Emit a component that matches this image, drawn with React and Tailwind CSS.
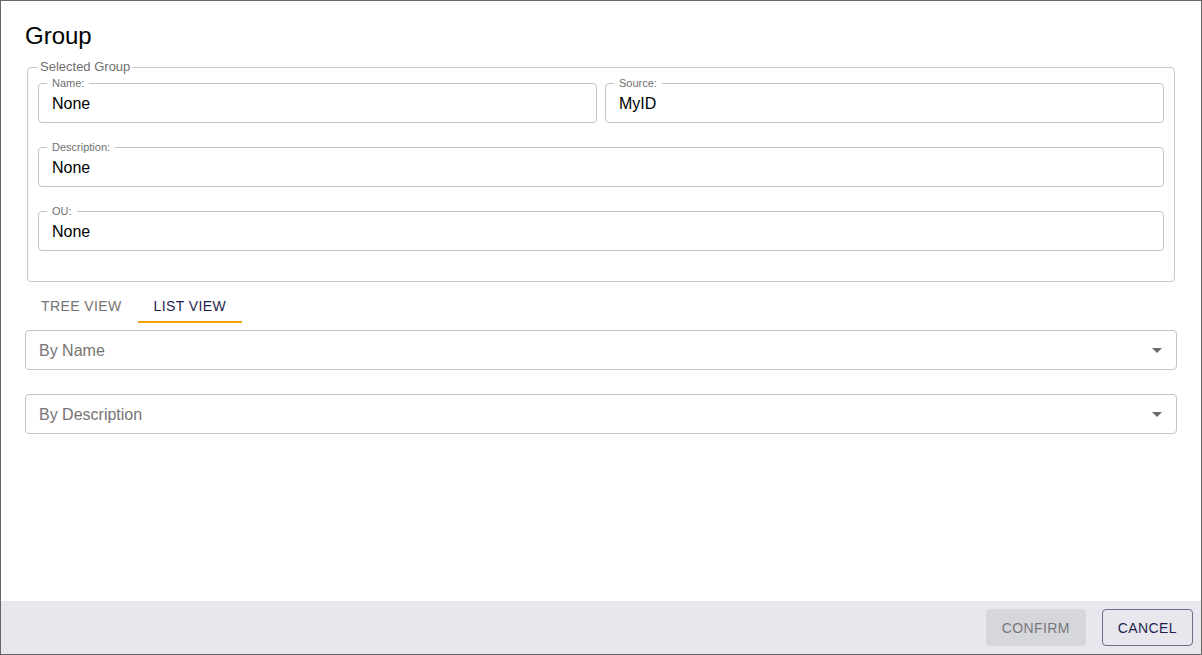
import React, { useState } from "react";

const font = { fontFamily: '"Liberation Sans", Arial, sans-serif' };

// Outlined read-only field with notched label
const Field = ({ label, value }) => (
  <fieldset className="min-w-0 flex-1 border border-[#c4c4c4] rounded-[4px] px-[13px] pt-[5px] pb-[9px]">
    <legend className="ml-[-5px] px-[5px] text-[11px] leading-[12px] text-[#6f6f6f]">{label}</legend>
    <div className="text-[16px] leading-[19px] text-black">{value}</div>
  </fieldset>
);

const SelectBox = ({ placeholder }) => (
  <div className="h-[40px] border border-[#c4c4c4] rounded-[4px] flex items-center pl-[13px] pr-[7px]">
    <span className="flex-1 pt-[2px] text-[16px] text-[#757575]">{placeholder}</span>
    <svg width="24" height="24" viewBox="0 0 24 24" fill="#6b6b6b">
      <path d="M7 10l5 5 5-5z" />
    </svg>
  </div>
);

export default function App() {
  const [tab, setTab] = useState("list");

  return (
    <div style={font} className="w-[1202px] h-[655px] border border-[#666666] bg-white flex flex-col">
      <div className="flex-1 px-[24px] pt-[19px]">
        <h1 className="text-[24px] leading-[32px] text-black">Group</h1>

        {/* Selected group details */}
        <fieldset className="mt-[8px] mx-[2px] border border-[#c8c8c8] rounded-[4px] px-[10px] pt-[3px] pb-[30px]">
          <legend className="px-[2px] text-[13px] leading-[14px] text-[#6f6f6f]">Selected Group</legend>
          <div className="flex flex-col gap-[18px]">
            <div className="flex gap-[8px]">
              <Field label="Name:" value="None" />
              <Field label="Source:" value="MyID" />
            </div>
            <Field label="Description:" value="None" />
            <Field label="OU:" value="None" />
          </div>
        </fieldset>

        {/* Tabs */}
        <div className="mt-[6px] flex h-[35px] text-[14px] tracking-[0.4px]">
          <button
            onClick={() => setTab("tree")}
            className={`px-[16px] pt-[4px] flex items-center border-b-2 ${tab === "tree" ? "border-[#f5a000] text-[#1f1f4f]" : "border-transparent text-[#737373]"}`}
          >
            TREE VIEW
          </button>
          <button
            onClick={() => setTab("list")}
            className={`px-[16px] pt-[4px] flex items-center border-b-2 ${tab === "list" ? "border-[#f5a000] text-[#1f1f4f]" : "border-transparent text-[#737373]"}`}
          >
            LIST VIEW
          </button>
        </div>

        <div className="mt-[7px] flex flex-col gap-[24px]">
          <SelectBox placeholder="By Name" />
          <SelectBox placeholder="By Description" />
        </div>
      </div>

      {/* Footer actions */}
      <div className="h-[53px] bg-[#e8e7ed] flex items-center justify-end gap-[16px] pr-[8px]">
        <button disabled className="h-[37px] px-[16px] pt-[2px] rounded-[4px] bg-[#d6d6dd] text-[14px] tracking-[0.4px] text-[#777777]">
          CONFIRM
        </button>
        <button className="h-[37px] px-[15px] pt-[2px] rounded-[4px] border border-[#6e6e87] text-[14px] tracking-[0.4px] text-[#1f1f4f]">
          CANCEL
        </button>
      </div>
    </div>
  );
}
